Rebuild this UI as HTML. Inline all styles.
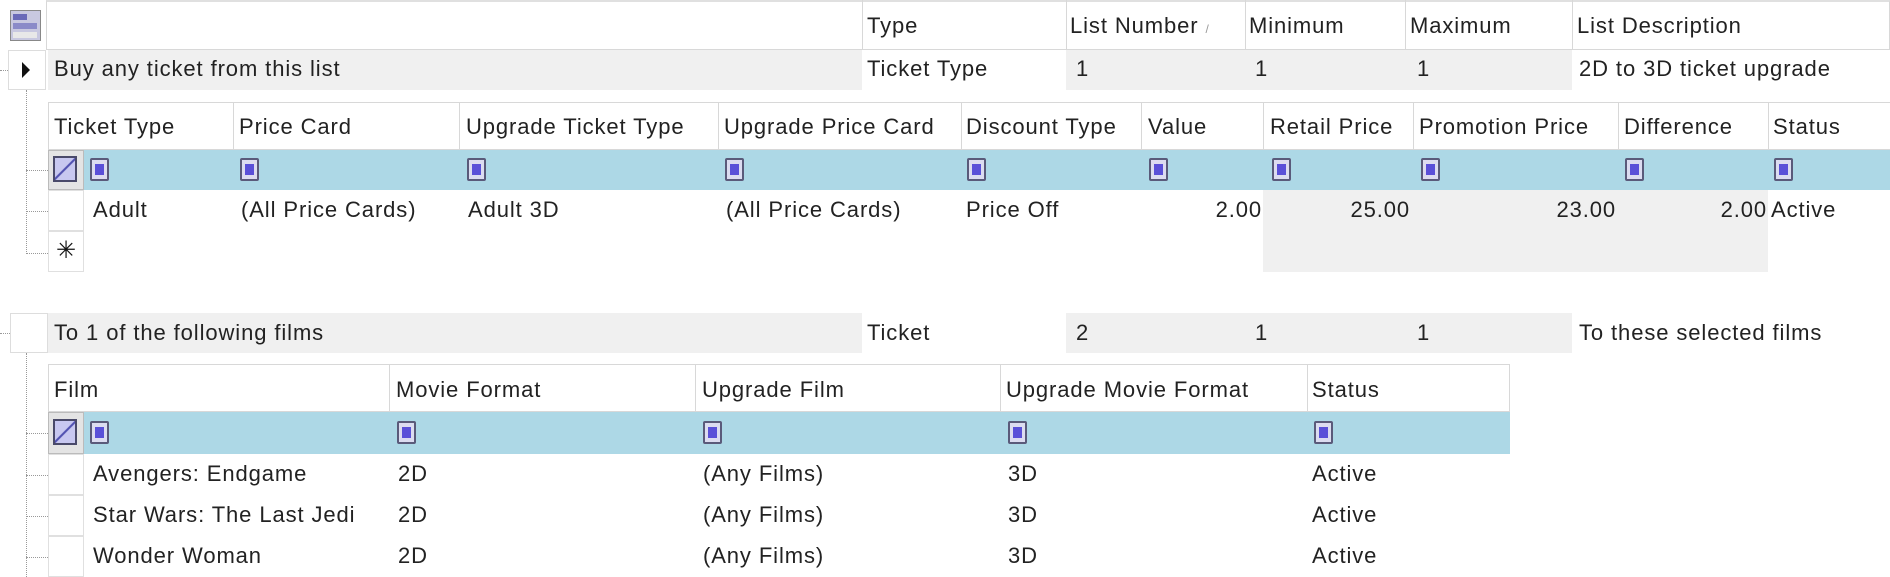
<!DOCTYPE html>
<html><head><meta charset="utf-8"><style>
*{margin:0;padding:0;box-sizing:border-box}
body{width:1890px;height:577px;background:#fff;position:relative;overflow:hidden;font-family:"Liberation Sans",sans-serif;font-size:22px;letter-spacing:0.9px;color:#222}
.a{position:absolute}
.t{position:absolute;white-space:nowrap;line-height:1;margin-top:-1px}
.g{background:#f0f0f0}
.cb{position:absolute;width:19px;height:23px;border:2px solid #5a5a7a;background:#dcdcf0;border-radius:2px}
.cb::after{content:"";position:absolute;left:3px;top:4px;width:9px;height:11px;background:#5a50d8}
.dot{position:absolute;border-left:1px dotted #999}
.doth{position:absolute;border-top:1px dotted #999}
</style></head><body>
<div class="a" style="left:46px;top:0;width:1844px;height:50px;border:1px solid #d8d8d8;border-top:2px solid #e0e0e0"></div>
<div class="a" style="left:10px;top:10px;width:31px;height:31px;background:#c8c8e0;border:1px solid #888"></div>
<div class="a" style="left:13px;top:14px;width:14px;height:6px;background:#6a6ab8"></div>
<div class="a" style="left:13px;top:23px;width:24px;height:6px;background:#8a8ac8"></div>
<div class="a" style="left:13px;top:32px;width:24px;height:6px;background:#e8e8e8"></div>
<div class="a" style="left:862px;top:0;height:50px;border-left:1px solid #d8d8d8"></div>
<div class="a" style="left:1066px;top:0;height:50px;border-left:1px solid #d8d8d8"></div>
<div class="a" style="left:1245px;top:0;height:50px;border-left:1px solid #d8d8d8"></div>
<div class="a" style="left:1405px;top:0;height:50px;border-left:1px solid #d8d8d8"></div>
<div class="a" style="left:1572px;top:0;height:50px;border-left:1px solid #d8d8d8"></div>
<div class="t" style="left:867px;top:16px">Type</div>
<div class="t" style="left:1070px;top:16px">List Number <span style="color:#999;font-size:12px">/</span></div>
<div class="t" style="left:1249px;top:16px">Minimum</div>
<div class="t" style="left:1410px;top:16px">Maximum</div>
<div class="t" style="left:1577px;top:16px">List Description</div>

<div class="a" style="left:8px;top:50px;width:38px;height:40px;border:1px solid #ddd"></div>
<div class="a" style="left:22px;top:62px;width:0;height:0;border-top:8px solid transparent;border-bottom:8px solid transparent;border-left:8px solid #111"></div>
<div class="a g" style="left:48px;top:50px;width:814px;height:40px"></div>
<div class="a g" style="left:1066px;top:50px;width:506px;height:40px"></div>
<div class="t" style="left:54px;top:59px">Buy any ticket from this list</div>
<div class="t" style="left:867px;top:59px">Ticket Type</div>
<div class="t" style="left:1076px;top:59px">1</div>
<div class="t" style="left:1255px;top:59px">1</div>
<div class="t" style="left:1417px;top:59px">1</div>
<div class="t" style="left:1579px;top:59px">2D to 3D ticket upgrade</div>
<div class="doth" style="left:0;top:70px;width:8px"></div>
<div class="dot" style="left:26px;top:90px;height:164px"></div>

<div class="a" style="left:48px;top:102px;width:1842px;height:48px;border:1px solid #d8d8d8;border-right:none"></div>
<div class="t" style="left:54px;top:117px">Ticket Type</div>
<div class="a" style="left:233px;top:102px;height:48px;border-left:1px solid #d8d8d8"></div><div class="t" style="left:239px;top:117px">Price Card</div>
<div class="a" style="left:459px;top:102px;height:48px;border-left:1px solid #d8d8d8"></div><div class="t" style="left:466px;top:117px">Upgrade Ticket Type</div>
<div class="a" style="left:718px;top:102px;height:48px;border-left:1px solid #d8d8d8"></div><div class="t" style="left:724px;top:117px">Upgrade Price Card</div>
<div class="a" style="left:961px;top:102px;height:48px;border-left:1px solid #d8d8d8"></div><div class="t" style="left:966px;top:117px">Discount Type</div>
<div class="a" style="left:1141px;top:102px;height:48px;border-left:1px solid #d8d8d8"></div><div class="t" style="left:1148px;top:117px">Value</div>
<div class="a" style="left:1263px;top:102px;height:48px;border-left:1px solid #d8d8d8"></div><div class="t" style="left:1270px;top:117px">Retail Price</div>
<div class="a" style="left:1413px;top:102px;height:48px;border-left:1px solid #d8d8d8"></div><div class="t" style="left:1419px;top:117px">Promotion Price</div>
<div class="a" style="left:1618px;top:102px;height:48px;border-left:1px solid #d8d8d8"></div><div class="t" style="left:1624px;top:117px">Difference</div>
<div class="a" style="left:1768px;top:102px;height:48px;border-left:1px solid #d8d8d8"></div><div class="t" style="left:1773px;top:117px">Status</div>
<div class="a" style="left:84px;top:150px;width:1806px;height:40px;background:#add8e6"></div>
<div class="a" style="left:48px;top:150px;width:36px;height:40px;background:#e4e4e4;border:1px solid #bbb"></div>
<div class="a" style="left:53px;top:156px;width:24px;height:26px;border:2px solid #4a4a6a;background:linear-gradient(135deg,#c8c8f0 45%,#5050b0 48%,#5050b0 52%,#c8c8f0 55%)"></div>
<div class="cb" style="left:90px;top:158px"></div>
<div class="cb" style="left:240px;top:158px"></div>
<div class="cb" style="left:467px;top:158px"></div>
<div class="cb" style="left:725px;top:158px"></div>
<div class="cb" style="left:967px;top:158px"></div>
<div class="cb" style="left:1149px;top:158px"></div>
<div class="cb" style="left:1272px;top:158px"></div>
<div class="cb" style="left:1421px;top:158px"></div>
<div class="cb" style="left:1625px;top:158px"></div>
<div class="cb" style="left:1774px;top:158px"></div>
<div class="a g" style="left:1263px;top:190px;width:505px;height:82px"></div>
<div class="a" style="left:48px;top:190px;width:36px;height:41px;border:1px solid #e0e0e0"></div>
<div class="a" style="left:48px;top:231px;width:36px;height:41px;border:1px solid #e0e0e0"></div>
<div class="t" style="left:48px;top:240px;width:36px;text-align:center;font-size:24px;color:#111;letter-spacing:0">✳</div>
<div class="doth" style="left:26px;top:170px;width:22px"></div>
<div class="doth" style="left:26px;top:211px;width:22px"></div>
<div class="doth" style="left:26px;top:253px;width:22px"></div>
<div class="t" style="left:93px;top:200px">Adult</div>
<div class="t" style="left:241px;top:200px">(All Price Cards)</div>
<div class="t" style="left:468px;top:200px">Adult 3D</div>
<div class="t" style="left:726px;top:200px">(All Price Cards)</div>
<div class="t" style="left:966px;top:200px">Price Off</div>
<div class="t" style="left:1141px;top:200px;width:121px;text-align:right">2.00</div>
<div class="t" style="left:1263px;top:200px;width:147px;text-align:right">25.00</div>
<div class="t" style="left:1413px;top:200px;width:203px;text-align:right">23.00</div>
<div class="t" style="left:1618px;top:200px;width:149px;text-align:right">2.00</div>
<div class="t" style="left:1771px;top:200px">Active</div>

<div class="a" style="left:10px;top:313px;width:38px;height:40px;border:1px solid #ddd"></div>
<div class="doth" style="left:0;top:333px;width:10px"></div>
<div class="a g" style="left:48px;top:313px;width:814px;height:40px"></div>
<div class="a g" style="left:1066px;top:313px;width:506px;height:40px"></div>
<div class="t" style="left:54px;top:323px">To 1 of the following films</div>
<div class="t" style="left:867px;top:323px">Ticket</div>
<div class="t" style="left:1076px;top:323px">2</div>
<div class="t" style="left:1255px;top:323px">1</div>
<div class="t" style="left:1417px;top:323px">1</div>
<div class="t" style="left:1579px;top:323px">To these selected films</div>
<div class="dot" style="left:26px;top:353px;height:224px"></div>

<div class="a" style="left:48px;top:364px;width:1462px;height:48px;border:1px solid #d8d8d8"></div>
<div class="t" style="left:54px;top:380px">Film</div>
<div class="a" style="left:389px;top:364px;height:48px;border-left:1px solid #d8d8d8"></div><div class="t" style="left:396px;top:380px">Movie Format</div>
<div class="a" style="left:695px;top:364px;height:48px;border-left:1px solid #d8d8d8"></div><div class="t" style="left:702px;top:380px">Upgrade Film</div>
<div class="a" style="left:1000px;top:364px;height:48px;border-left:1px solid #d8d8d8"></div><div class="t" style="left:1006px;top:380px">Upgrade Movie Format</div>
<div class="a" style="left:1307px;top:364px;height:48px;border-left:1px solid #d8d8d8"></div><div class="t" style="left:1312px;top:380px">Status</div>
<div class="a" style="left:84px;top:412px;width:1426px;height:42px;background:#add8e6"></div>
<div class="a" style="left:48px;top:412px;width:36px;height:42px;background:#e4e4e4;border:1px solid #bbb"></div>
<div class="a" style="left:53px;top:419px;width:24px;height:26px;border:2px solid #4a4a6a;background:linear-gradient(135deg,#c8c8f0 45%,#5050b0 48%,#5050b0 52%,#c8c8f0 55%)"></div>
<div class="cb" style="left:90px;top:421px"></div>
<div class="cb" style="left:397px;top:421px"></div>
<div class="cb" style="left:703px;top:421px"></div>
<div class="cb" style="left:1008px;top:421px"></div>
<div class="cb" style="left:1314px;top:421px"></div>
<div class="a" style="left:48px;top:454px;width:36px;height:41px;border:1px solid #e0e0e0"></div>
<div class="a" style="left:48px;top:495px;width:36px;height:41px;border:1px solid #e0e0e0"></div>
<div class="a" style="left:48px;top:536px;width:36px;height:41px;border:1px solid #e0e0e0"></div>
<div class="doth" style="left:26px;top:433px;width:22px"></div>
<div class="doth" style="left:26px;top:475px;width:22px"></div>
<div class="doth" style="left:26px;top:516px;width:22px"></div>
<div class="doth" style="left:26px;top:557px;width:22px"></div>
<div class="t" style="left:93px;top:464px">Avengers: Endgame</div>
<div class="t" style="left:398px;top:464px">2D</div>
<div class="t" style="left:703px;top:464px">(Any Films)</div>
<div class="t" style="left:1008px;top:464px">3D</div>
<div class="t" style="left:1312px;top:464px">Active</div>
<div class="t" style="left:93px;top:505px">Star Wars: The Last Jedi</div>
<div class="t" style="left:398px;top:505px">2D</div>
<div class="t" style="left:703px;top:505px">(Any Films)</div>
<div class="t" style="left:1008px;top:505px">3D</div>
<div class="t" style="left:1312px;top:505px">Active</div>
<div class="t" style="left:93px;top:546px">Wonder Woman</div>
<div class="t" style="left:398px;top:546px">2D</div>
<div class="t" style="left:703px;top:546px">(Any Films)</div>
<div class="t" style="left:1008px;top:546px">3D</div>
<div class="t" style="left:1312px;top:546px">Active</div>
</body></html>
